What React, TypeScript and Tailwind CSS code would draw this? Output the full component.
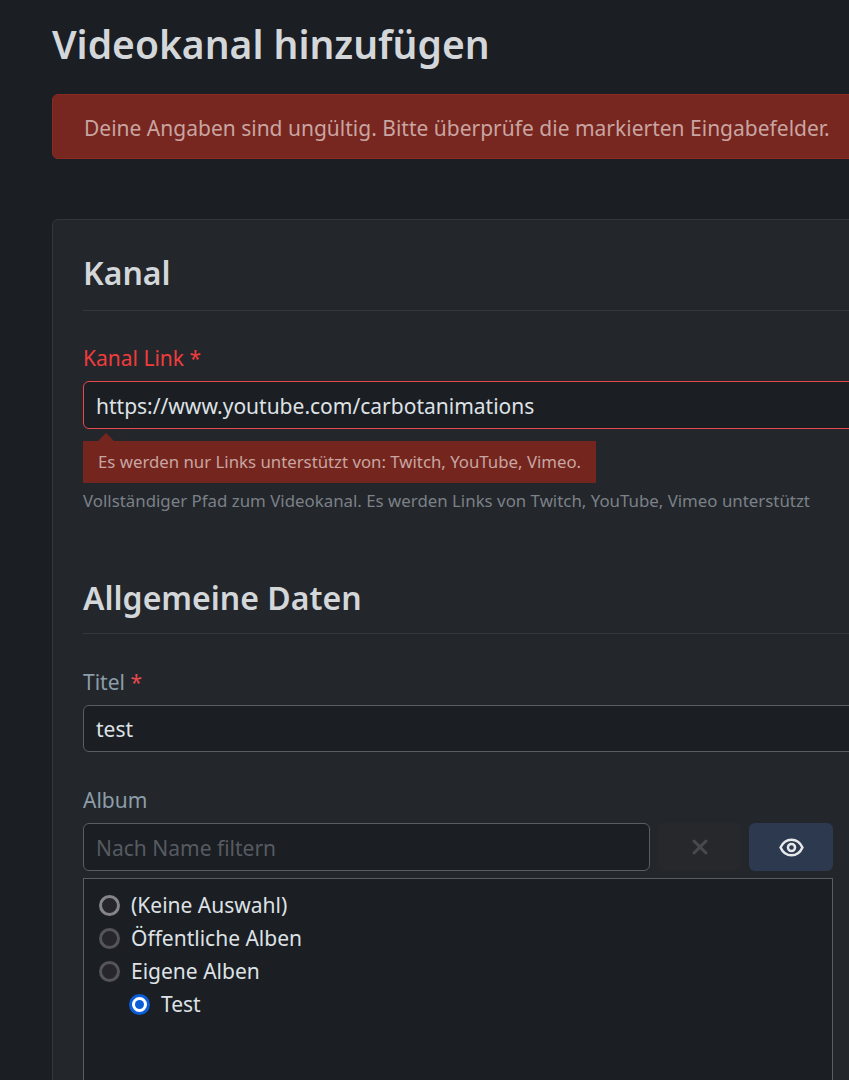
import { X } from 'lucide-react';

const albums = [
    { label: '(Keine Auswahl)', ring: 'border-[#85838c]' },
    { label: 'Öffentliche Alben', ring: 'border-[#54545a]' },
    { label: 'Eigene Alben', ring: 'border-[#54545a]' },
];

function Radio({ ring }: { ring: string }) {
    return <span className={`h-[21px] w-[21px] shrink-0 rounded-full border-[3px] bg-[#26262c] ${ring}`} />;
}

function EyeIcon() {
    return (
        <svg width="25" height="25" viewBox="0 0 24 24" fill="none" stroke="currentColor" strokeWidth="2.4">
            <path d="M1.5 12C3.5 7.5 7.5 4.5 12 4.5S20.5 7.5 22.5 12C20.5 16.5 16.5 19.5 12 19.5S3.5 16.5 1.5 12Z" />
            <circle cx="12" cy="12" r="3.4" />
        </svg>
    );
}

export default function App() {
    return (
        <div className="h-[1080px] overflow-hidden bg-[#1b1e23] font-['Noto_Sans',sans-serif] text-[21px] text-[#dee2e6]">
            <div className="w-[1100px] pl-[52px]">
                <h1 className="pt-[16px] pb-[22px] text-[39px] leading-[56px] font-semibold text-[#d4d7da]">Videokanal hinzufügen</h1>

                <div className="mb-[60px] h-[65px] rounded-md border border-[#8c2a22] bg-[#772620] px-[31px] pt-[18px] pb-[16px] leading-[30px] text-[#c9a5a1]">
                    Deine Angaben sind ungültig. Bitte überprüfe die markierten Eingabefelder.
                </div>

                <div className="rounded-md border border-[#33373d] bg-[#23262b] px-[30px] pt-[29px] pb-[40px]">
                    <h2 className="border-b border-[#33373d] pb-[13px] text-[32px] leading-[48px] font-semibold text-[#d4d7da]">Kanal</h2>

                    <div className="mt-[32px] pb-[1px] leading-[30px] text-[#f03c3c]">Kanal Link *</div>
                    <div className="mt-[7px] flex h-[48px] items-center rounded-md border border-[#e5484d] bg-[#1b1e23] px-[12px] pt-[3px] text-[#dee2e6]">
                        https://www.youtube.com/carbotanimations
                    </div>
                    <div className="relative mt-[12px] w-fit bg-[#73251e] px-[15px] py-[8px] text-[16.8px] leading-[26px] text-[#c9a5a1]">
                        <span className="absolute -top-[8px] left-[15px] h-0 w-0 border-x-[8px] border-b-[8px] border-x-transparent border-b-[#73251e]" />
                        Es werden nur Links unterstützt von: Twitch, YouTube, Vimeo.
                    </div>
                    <div className="mt-[6px] text-[16.85px] leading-[24px] text-[#7b8188]">
                        Vollständiger Pfad zum Videokanal. Es werden Links von Twitch, YouTube, Vimeo unterstützt
                    </div>

                    <h2 className="mt-[61px] border-b border-[#33373d] pb-[11px] text-[32px] leading-[48px] font-semibold text-[#d4d7da]">Allgemeine Daten</h2>

                    <div className="mt-[33px] leading-[30px] text-[#8b9da8]">Titel <span className="text-[#e5484d]">*</span></div>
                    <div className="mt-[8px] flex h-[47px] items-center rounded-md border border-[#5a5e64] bg-[#1b1e23] px-[12px] pt-[2px] text-[#dee2e6]">test</div>

                    <div className="mt-[33px] leading-[30px] text-[#8b9da8]">Album</div>
                    <div className="mt-[8px] flex h-[48px] w-[750px] gap-[8px]">
                        <div className="flex w-[567px] items-center rounded-md border border-[#5a5e64] bg-[#1b1e23] px-[12px] pt-[3px] text-[#565b61]">Nach Name filtern</div>
                        <div className="flex w-[83px] items-center justify-center rounded-md bg-[#26282c] text-[#47494d]"><X size={24} strokeWidth={3} /></div>
                        <div className="flex w-[84px] items-center justify-center rounded-md bg-[#2c394e] text-[#e6e8ea]"><EyeIcon /></div>
                    </div>
                    <div className="mt-[7px] h-[400px] w-[750px] border border-[#5a5e64] bg-[#1b1e23] px-[15px] py-[10px]">
                        {albums.map((a) => (
                            <div key={a.label} className="flex h-[33px] items-center gap-[11px]">
                                <Radio ring={a.ring} />
                                <span>{a.label}</span>
                            </div>
                        ))}
                        <div className="flex h-[33px] items-center gap-[11px] pl-[30px]">
                            <span className="flex h-[21px] w-[21px] shrink-0 items-center justify-center rounded-full border-[3px] border-[#0b5ed7] bg-white">
                                <span className="h-[9px] w-[9px] rounded-full bg-[#0b5ed7]" />
                            </span>
                            <span>Test</span>
                        </div>
                    </div>
                </div>
            </div>
        </div>
    );
}
